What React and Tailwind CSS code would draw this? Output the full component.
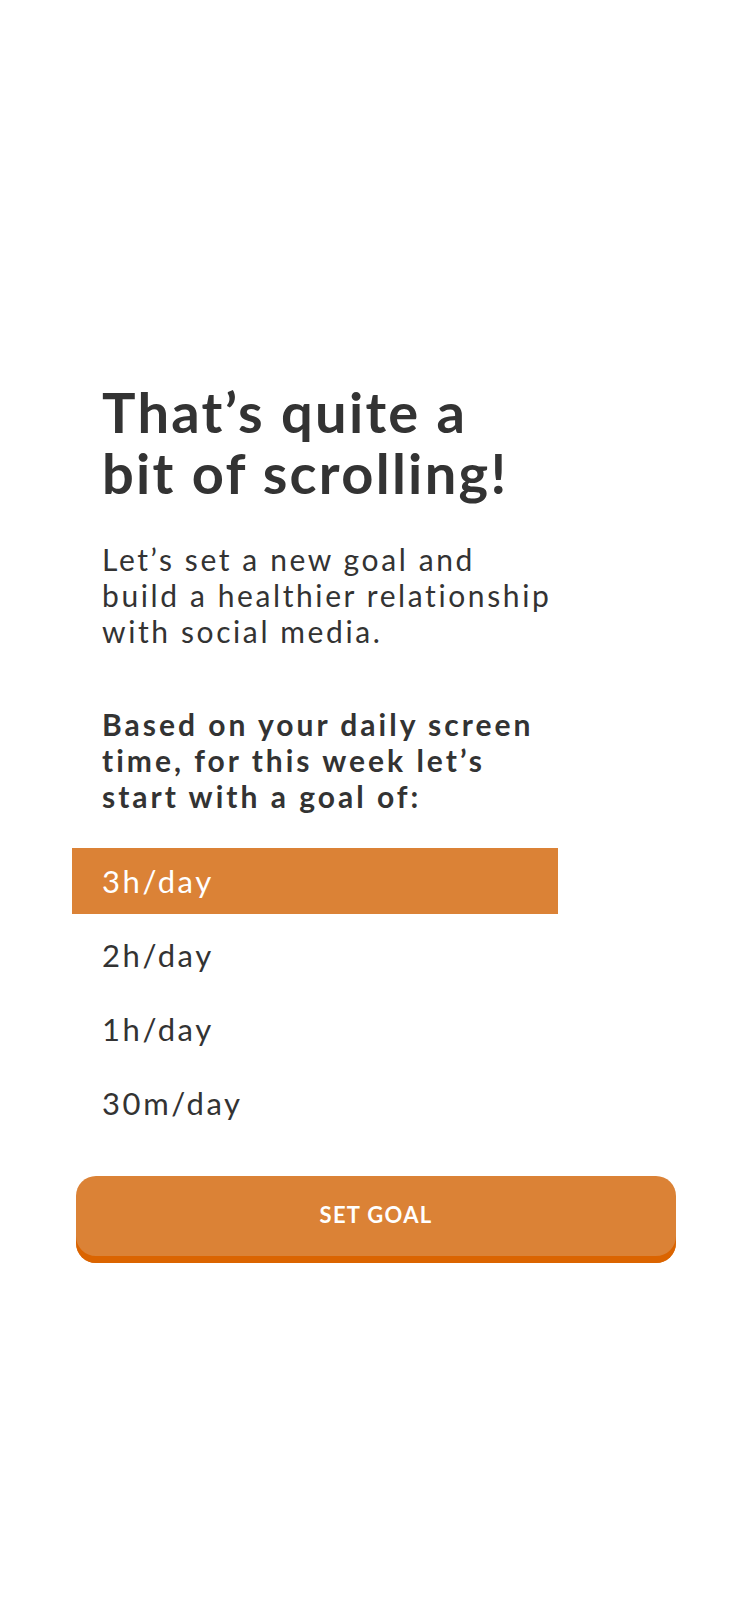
import { useState } from 'react';

const goals = ['3h/day', '2h/day', '1h/day', '30m/day'];

export default function App() {
  const [selected, setSelected] = useState('3h/day');

  return (
    <div
      className="min-h-[1624px] w-[750px] bg-white text-[#333333]"
      style={{ fontFamily: 'Lato, "Noto Sans", sans-serif' }}
    >
      <div className="pt-[381px] px-[72px]">
        <div className="px-[30px]">
          <h1 className="text-[56px] leading-[61px] font-bold tracking-[2.3px]">
            That’s quite a<br />bit of scrolling!
          </h1>
          <p className="mt-[38px] text-[30px] leading-[36px] tracking-[2.6px]">
            Let’s set a new goal and<br />
            build a healthier relationship<br />
            with social media.
          </p>
          <p className="mt-[57px] text-[30px] leading-[36px] font-bold tracking-[3px]">
            Based on your daily screen<br />
            time, for this week let’s<br />
            start with a goal of:
          </p>
        </div>

        <div className="mt-[34px] flex flex-col gap-[8px] w-[486px]">
          {goals.map(goal => (
            <button
              key={goal}
              onClick={() => setSelected(goal)}
              className={
                goal === selected
                  ? 'h-[66px] px-[30px] text-left text-[31px] tracking-[2.6px] bg-[#db8236] text-white'
                  : 'h-[66px] px-[30px] text-left text-[31px] tracking-[2.6px] bg-white text-[#333333]'
              }
            >
              {goal}
            </button>
          ))}
        </div>
      </div>

      <div className="mt-[40px] px-[76px]">
        <button className="w-[600px] h-[87px] pb-[11px] rounded-[20px] bg-[#db8236] shadow-[inset_0_-7px_0_#db6400] text-white text-[22px] font-bold tracking-[1.3px]">
          SET GOAL
        </button>
      </div>
    </div>
  );
}
